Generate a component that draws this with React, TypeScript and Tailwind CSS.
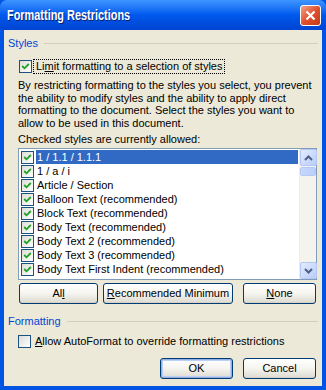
import React from 'react';

const styles = [
  '1 / 1.1 / 1.1.1',
  '1 / a / i',
  'Article / Section',
  'Balloon Text (recommended)',
  'Block Text (recommended)',
  'Body Text (recommended)',
  'Body Text 2 (recommended)',
  'Body Text 3 (recommended)',
  'Body Text First Indent (recommended)',
];

function CheckBox({ checked }: { checked: boolean }) {
  return (
    <span className="w-[13px] h-[13px] border border-[#1c5180] bg-gradient-to-br from-[#dcdcd7] to-white flex items-center justify-center shrink-0">
      {checked && (
        <svg width="9" height="9" viewBox="0 0 9 9">
          <path d="M1.2 4 L3.5 6.3 L7.8 2" stroke="#21a121" strokeWidth="1.8" fill="none" />
        </svg>
      )}
    </span>
  );
}

function GroupLabel({ text }: { text: string }) {
  return (
    <div className="flex items-center gap-[6px] pl-[4px] pr-[4px] h-[14px]">
      <span className="text-[#0046d5] leading-[14px]">{text}</span>
      <div className="flex-1 h-px bg-[#d0d0bf]" />
    </div>
  );
}

function XpButton({ children, w, isDefault }: { children: React.ReactNode; w: string; isDefault?: boolean }) {
  return (
    <button
      className={`${w} h-[21px] rounded-[3px] border border-[#003c74] bg-gradient-to-b from-white via-[#f5f4ef] to-[#dcdad0] text-black leading-none flex items-center justify-center ${
        isDefault ? 'shadow-[inset_0_0_0_1px_#97aee2,inset_0_0_0_2px_#bccff4]' : 'shadow-[inset_0_-1px_0_#d6d0c5]'
      }`}
    >
      {children}
    </button>
  );
}

function ScrollArrow({ up }: { up: boolean }) {
  return (
    <div className="w-[17px] h-[17px] rounded-[2px] border border-[#b4c8f6] bg-gradient-to-br from-[#e3ebff] to-[#b9cdf9] flex items-center justify-center">
      <svg width="9" height="6" viewBox="0 0 9 6">
        <path d={up ? 'M1 5 L4.5 1.5 L8 5' : 'M1 1 L4.5 4.5 L8 1'} stroke="#4d6185" strokeWidth="2" fill="none" />
      </svg>
    </div>
  );
}

export default function App() {
  return (
    <div className="w-[326px] h-[390px] bg-[#0054e3] flex flex-col font-['Tahoma','Liberation_Sans',sans-serif] text-[11px] text-black overflow-hidden">
      {/* Title bar */}
      <div className="h-[30px] shrink-0 bg-gradient-to-b from-[#3d95ff] via-[#0058ee] to-[#0044d0] rounded-t-[7px] flex items-center pl-[7px] pr-[5px]">
        <div className="flex-1">
          <span className="inline-block origin-left scale-x-[0.78] text-white font-bold text-[14px] font-['Liberation_Sans',sans-serif] [text-shadow:1px_1px_0_#0a1e6a] whitespace-nowrap">
            Formatting Restrictions
          </span>
        </div>
        <div className="w-[21px] h-[21px] rounded-[3px] border border-white bg-gradient-to-br from-[#f0a08a] via-[#e0502e] to-[#c33a17] flex items-center justify-center">
          <svg width="11" height="11" viewBox="0 0 11 11">
            <path d="M1.5 1.5 L9.5 9.5 M9.5 1.5 L1.5 9.5" stroke="white" strokeWidth="2.2" />
          </svg>
        </div>
      </div>

      {/* Client area */}
      <div className="flex-1 mx-[4px] mb-[4px] bg-[#ece9d8] flex flex-col pt-[6px]">
        <GroupLabel text="Styles" />

        <div className="flex items-center mt-[8px] pl-[15px] h-[16px]">
          <CheckBox checked />
          <span className="ml-[1px] px-[2px] border border-dotted border-black leading-[13px]">
            Li<span className="underline">m</span>it formatting to a selection of styles
          </span>
        </div>

        <p className="mt-[5px] pl-[14px] pr-[4px] leading-[12.5px]">
          By restricting formatting to the styles you select, you prevent the ability to modify styles and the ability to apply direct formatting to the document. Select the styles you want to allow to be used in this document.
        </p>
        <p className="mt-[4px] pl-[14px] leading-[13px]">Checked styles are currently allowed:</p>

        {/* List */}
        <div className="mt-[2px] ml-[14px] w-[299px] h-[132px] border border-[#7f9db9] bg-white flex">
          <div className="flex-1 pt-[1px] pl-[2px]">
            {styles.map((s, i) => (
              <div key={s} className="h-[14px] flex items-center">
                <CheckBox checked />
                <span
                  className={`ml-[2px] pl-[1px] h-[14px] leading-[14px] ${
                    i === 0 ? 'bg-[#316ac5] text-white flex-1 mr-[1px]' : ''
                  }`}
                >
                  {s}
                </span>
              </div>
            ))}
          </div>
          <div className="w-[17px] bg-[#f4f3ee] border-l border-[#eeede5] flex flex-col">
            <ScrollArrow up />
            <div className="h-[9px] mt-[1px] rounded-[2px] border border-[#b4c8f6] bg-gradient-to-r from-[#c8d6fb] to-[#bad0fa]" />
            <div className="flex-1" />
            <ScrollArrow up={false} />
          </div>
        </div>

        {/* Buttons row */}
        <div className="flex mt-[3px] pl-[15px]">
          <XpButton w="w-[79px]">
            Al<span className="underline">l</span>
          </XpButton>
          <div className="w-[5px]" />
          <XpButton w="w-[130px]">
            <span className="underline">R</span>ecommended Minimum
          </XpButton>
          <div className="w-[10px]" />
          <XpButton w="w-[73px]">
            <span className="underline">N</span>one
          </XpButton>
        </div>

        <div className="mt-[10px]">
          <GroupLabel text="Formatting" />
        </div>

        <div className="flex items-center mt-[7px] pl-[14px] h-[13px]">
          <CheckBox checked={false} />
          <span className="ml-[4px] leading-[13px]">
            <span className="underline">A</span>llow AutoFormat to override formatting restrictions
          </span>
        </div>

        <div className="flex mt-[10px] pl-[156px]">
          <XpButton w="w-[73px]" isDefault>
            OK
          </XpButton>
          <div className="w-[10px]" />
          <XpButton w="w-[73px]">Cancel</XpButton>
        </div>
      </div>
    </div>
  );
}
